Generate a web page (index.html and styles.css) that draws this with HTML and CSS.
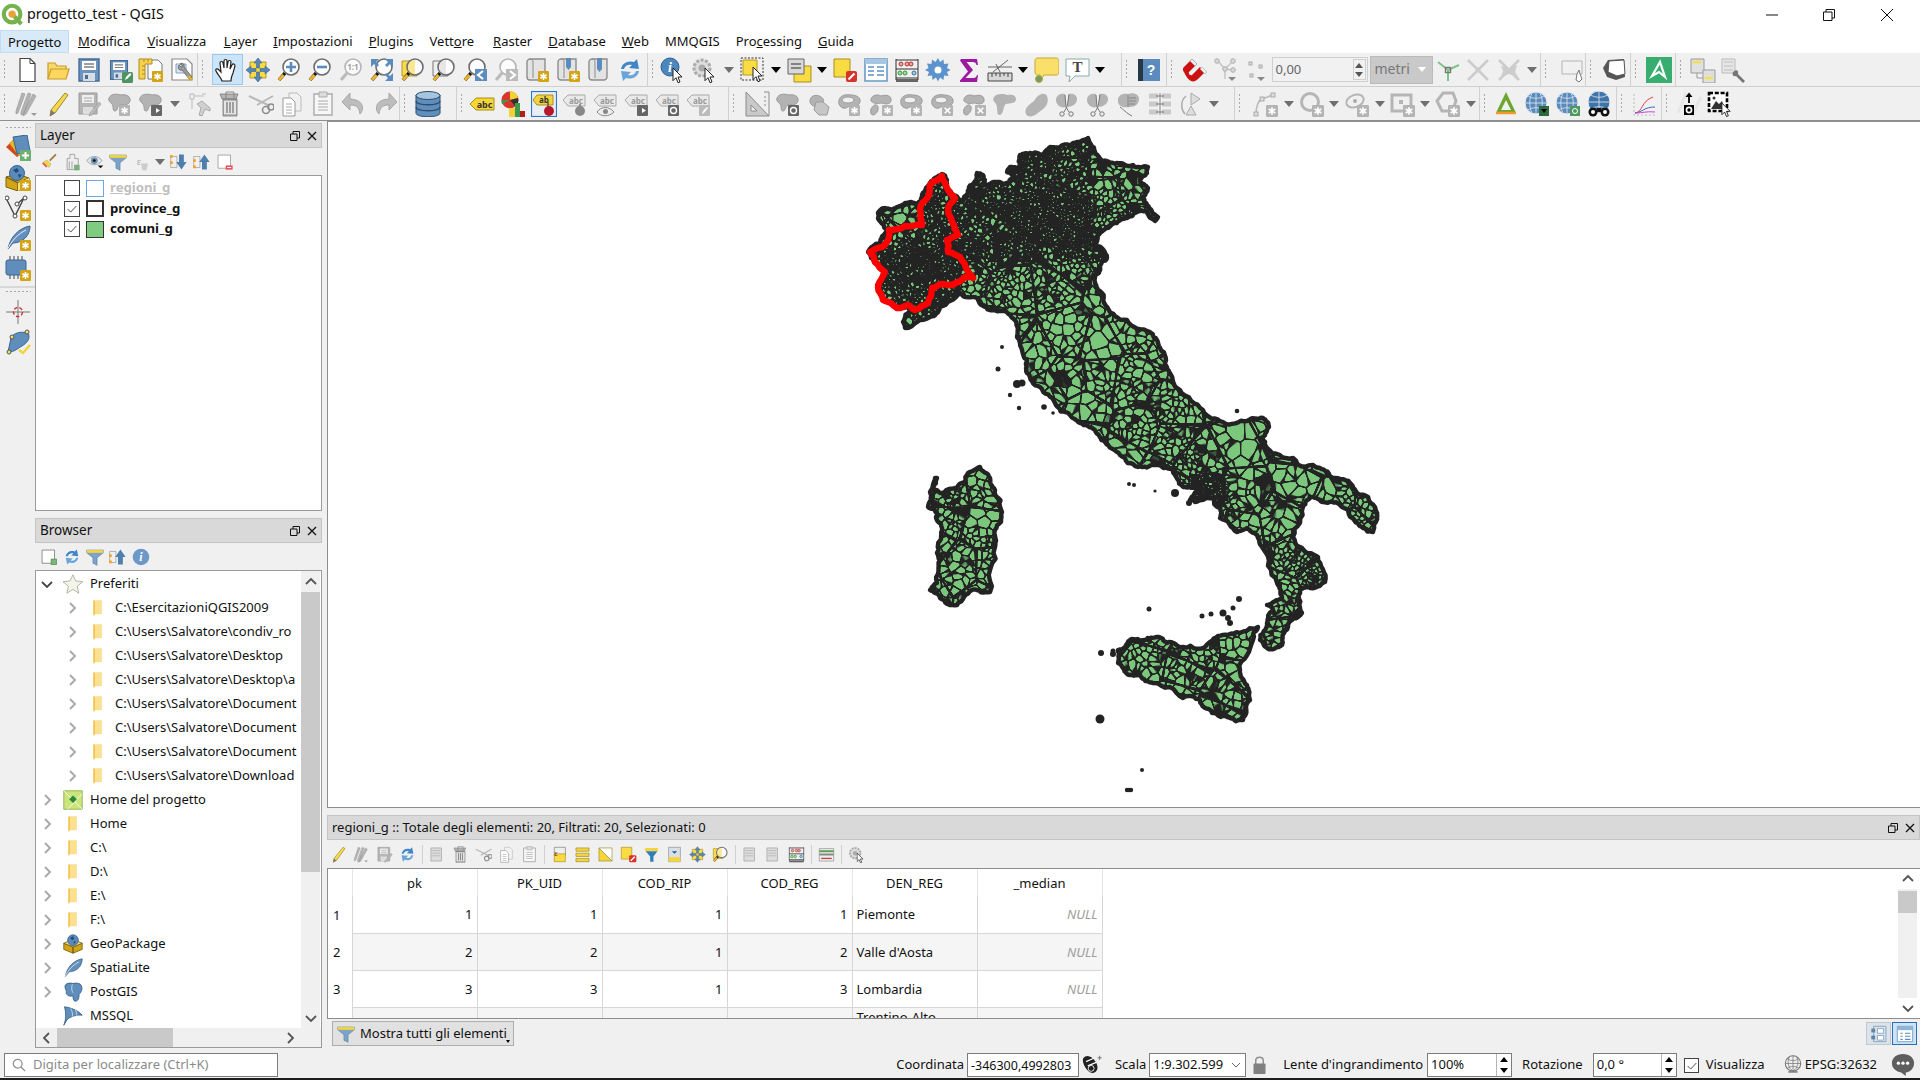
FILE: index.html
```html
<!DOCTYPE html>
<html lang="it">
<head>
<meta charset="utf-8">
<title>progetto_test - QGIS</title>
<link rel="stylesheet" href="styles.css">
</head>
<body>
<svg class="sprite" xmlns="http://www.w3.org/2000/svg">
<defs>
<symbol id="gb" viewBox="0 0 10 10"><rect width="10" height="10" rx="1" fill="#d3a516"/><path d="M5 1.8v6.4M2.2 3.4l5.6 3.2M2.2 6.6l5.6-3.2" stroke="#fff" stroke-width="1.4"/></symbol>
<symbol id="gg" viewBox="0 0 10 10"><rect width="10" height="10" rx="1" fill="#b4b4b4"/><path d="M5 1.8v6.4M2.2 3.4l5.6 3.2M2.2 6.6l5.6-3.2" stroke="#fff" stroke-width="1.4"/></symbol>
<symbol id="gx" viewBox="0 0 10 10"><rect width="10" height="10" rx="1" fill="#b4b4b4"/><path d="M2.5 2.5l5 5M7.5 2.5l-5 5" stroke="#fff" stroke-width="1.6"/></symbol>
<symbol id="blob" viewBox="0 0 26 26"><path d="M2 7c2-5 9-4 12-3 5-1 10 1 9 6-1 5-7 3-10 4-3 1-2 6-5 6-3 0-1-5-3-7S1 10 2 7z" fill="#b3b3b3" stroke="#9c9c9c"/></symbol>
<symbol id="ring" viewBox="0 0 26 26"><path d="M2 9c1-5 8-6 12-5 5 0 10 2 9 7-1 5-7 3-10 4-3 1-4 3-7 2S1 13 2 9z" fill="#b3b3b3" stroke="#9c9c9c"/><ellipse cx="11" cy="9" rx="6" ry="3" fill="#f0f0f0" stroke="#9c9c9c"/></symbol>
<symbol id="mag" viewBox="0 0 26 26"><path d="M9 16l-6 7" stroke="#111" stroke-width="3.4"/><path d="M7.5 18l-4.6 5" stroke="#ecb42a" stroke-width="3"/><circle cx="15" cy="10" r="8" fill="#fbfcfd" stroke="#6d6d6d" stroke-width="1.6"/></symbol>
<symbol id="magg" viewBox="0 0 26 26"><path d="M9 16l-6 7" stroke="#bbb" stroke-width="3.2"/><circle cx="15" cy="10" r="8" fill="#fbfcfd" stroke="#b5b5b5" stroke-width="1.6"/></symbol>
<symbol id="scr" viewBox="0 0 26 26"><path d="M6 2h15v18c0 2-2 3-3 3H6c-2 0-3-1-3-3V5c0-2 2-3 3-3z" fill="#e3e3e3" stroke="#8d8d8d" stroke-width="1.4"/><path d="M6 2c2 0 3 1 3 3v16" fill="none" stroke="#8d8d8d"/></symbol>
<symbol id="doc" viewBox="0 0 26 26"><path d="M6 1.5h10l5 5v18H6z" fill="#fff" stroke="#444" stroke-width="1.2"/><path d="M16 1.5v5h5" fill="none" stroke="#444"/></symbol>
<symbol id="fold" viewBox="0 0 26 26"><path d="M3 22V6h7l2 3h9v3" fill="#f8d86b" stroke="#cc9c24" stroke-width="1.2"/><path d="M3 22l3-10h18l-3 10z" fill="#fcd75f" stroke="#cc9c24" stroke-width="1.2"/></symbol>
<symbol id="sav" viewBox="0 0 26 26"><path d="M3 2h20v22H3z" fill="#6b93be" stroke="#456c95" stroke-width="1.4"/><path d="M6 4h14v9H6z" fill="#fff"/><path d="M8 7h10M8 10h10" stroke="#7d7d7d" stroke-width="1.3"/><path d="M7 16h12v8H7z" fill="#d7dde2"/><path d="M9 18h3v4H9z" fill="#456c95"/></symbol>
<symbol id="savas" viewBox="0 0 26 26"><use href="#sav" width="22" height="22" x="1" y="2"/><rect x="15" y="15" width="11" height="11" rx="1.5" fill="#4f9362"/><path d="M18 23l1-3 4-4 1.5 1.5-4 4z" fill="#fff"/></symbol>
<symbol id="lay" viewBox="0 0 26 26"><path d="M10 3h10l4 4v15H10z" fill="#fff" stroke="#777"/><path d="M1 2h13v5H7v15H1z" fill="#f5d14d" stroke="#b28d1c"/><path d="M4 9h3M4 13h3M4 17h3M6 2v3M10 2v3" stroke="#b28d1c"/><use href="#gb" x="14" y="14" width="11" height="11"/></symbol>
<symbol id="mgr" viewBox="0 0 26 26"><path d="M3 2h15l5 5v16H3z" fill="#fff" stroke="#888" stroke-width="1.2"/><path d="M7 7h10v9H7z" fill="#dbe6f1" stroke="#7f9fc0"/><path d="M11 7c3-2 5 1 4 3l8 10-2 3-8-10c-3 1-5-2-3-5l2 2 2-1z" fill="#9a9a9a" stroke="#555" stroke-width=".7"/><path d="M19 19l4 4" stroke="#dcae2d" stroke-width="3"/></symbol>
<symbol id="hand" viewBox="0 0 26 26"><path d="M8 24c-1-4-5-7-6-10-1-2 1-3 3-1l2 2-1-9c0-2 3-2 3 0l1 5V4c0-2 3-2 3 0v7l1-6c0-2 3-2 3 0l-1 7 2-4c1-2 3-1 3 1l-2 7c-1 3-2 4-2 8z" fill="#fff" stroke="#222" stroke-width="1.2"/></symbol>
<symbol id="pan" viewBox="0 0 26 26"><path d="M5 5h16v16H5z" fill="#f9dc42" stroke="#b3982b"/><path d="M13 1l4 5h-2.500v5h-3V6H9zM13 25l4-5h-2.500v-5h-3v5H9zM1 13l5-4v2.500h5v3H6V17zM25 13l-5-4v2.500h-5v3h5V17z" fill="#5785b5" stroke="#3a6592" stroke-width=".6"/></symbol>
<symbol id="zin" viewBox="0 0 26 26"><use href="#mag"/><path d="M10 10h10M15 5v10" stroke="#5b8cbd" stroke-width="2.600"/></symbol>
<symbol id="zout" viewBox="0 0 26 26"><use href="#mag"/><path d="M10 10h10" stroke="#5b8cbd" stroke-width="2.600"/></symbol>
<symbol id="z11" viewBox="0 0 26 26"><use href="#magg"/><text x="15" y="13" font-size="8" font-weight="700" text-anchor="middle" fill="#9e9e9e" font-family="Noto Sans">1:1</text></symbol>
<symbol id="zfull" viewBox="0 0 26 26"><use href="#mag"/><path d="M2 2h8L7 5l3 3-2 2-3-3-3 3zM24 2v8l-3-3-3 3-2-2 3-3-3-3zM24 24h-8l3-3-3-3 2-2 3 3 3-3z" fill="#5b8cbd"/></symbol>
<symbol id="zsel" viewBox="0 0 26 26"><path d="M2 4h15v15H2z" fill="#f8da4a" stroke="#b39626"/><use href="#mag"/><path d="M15 3a7 7 0 0 0 0 14z" fill="#f8da4a" opacity=".6"/></symbol>
<symbol id="zlay" viewBox="0 0 26 26"><path d="M2 4h15v15H2z" fill="#eee" stroke="#777"/><use href="#mag"/><path d="M15 3a7 7 0 0 0 0 14z" fill="#ddd" opacity=".7"/></symbol>
<symbol id="zlast" viewBox="0 0 26 26"><use href="#mag"/><path d="M13 12h12v12H13z" fill="#5b8cbd"/><path d="M21 14l-5 4 5 4" fill="none" stroke="#fff" stroke-width="2.200"/></symbol>
<symbol id="znext" viewBox="0 0 26 26"><use href="#magg"/><path d="M13 12h12v12H13z" fill="#bbb"/><path d="M17 14l5 4-5 4" fill="none" stroke="#fff" stroke-width="2.200"/></symbol>
<symbol id="map" viewBox="0 0 26 26"><use href="#scr"/><use href="#gb" x="14" y="14" width="11" height="11"/></symbol>
<symbol id="bmn" viewBox="0 0 26 26"><use href="#scr"/><path d="M11 1h5v9l-2.500 3-2.500-3z" fill="#5b8cbd"/><use href="#gb" x="14" y="14" width="11" height="11"/></symbol>
<symbol id="bm" viewBox="0 0 26 26"><use href="#scr"/><path d="M11 1h5v11l-2.500 3-2.500-3z" fill="#5b8cbd"/></symbol>
<symbol id="ref" viewBox="0 0 26 26"><path d="M4 12C5 6 11 3 17 5l3-3 2 10-10-1 3-3c-3-1-7 0-8 4z" fill="#3f86c9"/><path d="M22 14c-1 6-7 9-13 7l-3 3-2-10 10 1-3 3c3 1 7 0 8-4z" fill="#6aa5d9"/></symbol>
<symbol id="cur" viewBox="0 0 12 16"><path d="M1 1l9 9H6l2 5-2 .700-2-5-3 3z" fill="#fff" stroke="#222"/></symbol>
<symbol id="ident" viewBox="0 0 26 26"><circle cx="10" cy="10" r="9" fill="#4d86bd" stroke="#2f5f90"/><text x="10" y="15" font-size="14" font-weight="700" font-style="italic" text-anchor="middle" fill="#fff" font-family="Liberation Serif">i</text><use href="#cur" x="12" y="10" width="12" height="16"/></symbol>
<symbol id="act" viewBox="0 0 26 26"><circle cx="11" cy="11" r="8" fill="#ddd" stroke="#aaa" stroke-width="3" stroke-dasharray="3 1.500"/><circle cx="11" cy="11" r="3.500" fill="#aaa"/><use href="#cur" x="13" y="10" width="12" height="16"/></symbol>
<symbol id="sel" viewBox="0 0 26 26"><path d="M1 1h22v22H1z" fill="none" stroke="#333" stroke-dasharray="2 1.500"/><path d="M3 3h14v15H3z" fill="#f9dc42" stroke="#b39626"/><use href="#cur" x="12" y="9" width="12" height="16"/></symbol>
<symbol id="selv" viewBox="0 0 26 26"><path d="M8 9h17v16H8z" fill="#f9dc42" stroke="#a98e20"/><path d="M2 2h16v15H2z" fill="#d8d8d8" stroke="#666"/><path d="M5 7h10M5 11h10" stroke="#666" stroke-width="1.600"/></symbol>
<symbol id="desel" viewBox="0 0 26 26"><path d="M2 2h16v18H2z" fill="#f9dc42" stroke="#a98e20"/><rect x="14" y="14" width="11" height="11" rx="2" fill="#d9312c"/><path d="M16.500 22.500l6-6" stroke="#fff" stroke-width="2.200"/></symbol>
<symbol id="tab" viewBox="0 0 26 26"><path d="M2 2h22v22H2z" fill="#fff" stroke="#6a99c6" stroke-width="1.600"/><path d="M2 2h22v5H2z" fill="#a8c6e2"/><path d="M5 10h6M14 10h7M5 14h6M14 14h7M5 18h6M14 18h7" stroke="#5c8fc0" stroke-width="1.500"/></symbol>
<symbol id="calc" viewBox="0 0 26 26"><path d="M2 3h22M2 12h22M2 21h22" stroke="#333" stroke-width="1.200"/><path d="M2 22h22v3H2z" fill="#666"/><path d="M2 2v21M24 2v21" stroke="#333"/><circle cx="7" cy="7" r="2" fill="#e2a9a4" stroke="#b33"/><circle cx="17" cy="7" r="2" fill="#e2a9a4" stroke="#b33"/><circle cx="13" cy="7" r="2" fill="#e2a9a4" stroke="#b33"/><circle cx="6" cy="16" r="2" fill="#a8d8a4" stroke="#393"/><circle cx="11" cy="16" r="2" fill="#a8d8a4" stroke="#393"/><circle cx="20" cy="16" r="2" fill="#a9c4e2" stroke="#37a"/></symbol>
<symbol id="gear" viewBox="0 0 26 26"><path d="M13 1l2 4 3.500-2.500.5 4.500 4.500-.5-1.500 4.500 3.500 2-3.500 2 1.500 4-4.500-.5-.5 4.500-3.500-2.500-2 4-2-4-3.500 2.500-.5-4.500-4.500.5 1.500-4L0 13l3.500-2L2 6.500 6.500 7 7 2.500 10.500 5z" fill="#5c93cd"/><circle cx="13" cy="13" r="3.500" fill="#fff"/></symbol>
<symbol id="sig" viewBox="0 0 26 26"><path d="M5 2h16l1 6h-1.500c-.5-2-1.500-3-4-3h-6l6.500 8-7.500 8h8c2 0 3-1 3.500-3H22l-1 7H4v-1.500l8-9L4 3.500z" fill="#9b1aa0"/></symbol>
<symbol id="meas" viewBox="0 0 26 26"><path d="M1 16h24v8H1z" fill="#d8d8d8" stroke="#444"/><path d="M5 16v4M9 16v3M13 16v4M17 16v3M21 16v4" stroke="#444"/><path d="M6 15L21 3M13 15L9 7M1 10h24" stroke="#555" stroke-width=".9" fill="none"/></symbol>
<symbol id="tip" viewBox="0 0 26 26"><path d="M5 1h18c2 0 3 1 3 3v11c0 2-1 3-3 3H11l-3 5c-1-2-1-4-1-5H5c-2 0-3-1-3-3V4c0-2 1-3 3-3z" fill="#fae06a" stroke="#c6a82d"/><circle cx="6" cy="22" r="3.500" fill="#6d9d6c" stroke="#c6a82d"/></symbol>
<symbol id="tann" viewBox="0 0 26 26"><path d="M2 2h23v17H11l-6 6 1-6H2z" fill="#fff" stroke="#8aa" stroke-width="1"/><text x="13.500" y="15" font-size="15" font-weight="700" text-anchor="middle" fill="#444" font-family="Liberation Serif">T</text></symbol>
<symbol id="help" viewBox="0 0 26 26"><path d="M3 2h21v22H3z" fill="#5b8cbd"/><path d="M2 2h5v22H2z" fill="#263746"/><text x="15" y="18" font-size="14" font-weight="700" text-anchor="middle" fill="#fff" font-family="Liberation Sans">?</text></symbol>
<symbol id="mgn" viewBox="0 0 26 26"><path d="M3 15c-2-2-1-4 0-5l8-8 5 5-8 8c-1 1 1 4 3 3l8-8 5 5-7 7c-5 5-10 2-14-7z" fill="#cc1111"/><path d="M11 2l5 5-2 2-5-5zM21 10l5 5-2 2-5-5z" fill="#eee" stroke="#999" stroke-width=".5"/></symbol>
<symbol id="vert" viewBox="0 0 26 26"><path d="M13 12L5 3M13 12l8-8M13 12v10M13 12l8 1" stroke="#c4c4c4" stroke-width="1.500"/><g fill="#d7d7d7" stroke="#b0b0b0"><circle cx="5" cy="4" r="2.300"/><circle cx="21" cy="4" r="2.300"/><circle cx="13" cy="12" r="2.300"/><circle cx="21" cy="13" r="2.300"/></g><path d="M16 20h8l-4 4z" fill="#888"/></symbol>
<symbol id="dots" viewBox="0 0 26 26"><g fill="#ddd" stroke="#aaa"><rect x="6" y="5" width="3" height="3"/><rect x="16" y="8" width="3" height="3"/><rect x="7" y="17" width="3" height="3"/></g><path d="M14 20h8l-4 4z" fill="#888"/></symbol>
<symbol id="tr" viewBox="0 0 26 26"><path d="M13 13L3 5M13 13l11-5M13 13v11" stroke="#7ec48a" stroke-width="2"/><rect x="10.500" y="10.500" width="5" height="5" fill="none" stroke="#777" stroke-width="1.400"/></symbol>
<symbol id="xg" viewBox="0 0 26 26"><path d="M3 3l20 20M23 3L3 23" stroke="#ccc" stroke-width="2.500"/><circle cx="13" cy="13" r="2.500" fill="#ccc"/></symbol>
<symbol id="xg2" viewBox="0 0 26 26"><path d="M3 3l20 20M23 3L3 23" stroke="#ccc" stroke-width="2.500"/><path d="M5 9l8 2 8-3-2 7 3 5-9-3-8 3 2-6z" fill="#ccc"/></symbol>
<symbol id="hnd" viewBox="0 0 26 26"><path d="M4 4h20v13H4z" fill="none" stroke="#b5b5b5"/><path d="M19 17l-1 6 3 2 3-3-2-5-1-4z" fill="#fff" stroke="#777"/></symbol>
<symbol id="cube" viewBox="0 0 26 26"><path d="M7 3l16-1 1 18-9 3-9-3-4-9z" fill="#555"/><path d="M8 4l15-1 1 14-8 2-9-4z" fill="#fff" stroke="#555"/></symbol>
<symbol id="ms" viewBox="0 0 26 26"><path d="M0 0h26v26H0z" fill="#37ae6f"/><path d="M14 5l5 15-6-5-7 4z" fill="none" stroke="#fff" stroke-width="2.200"/></symbol>
<symbol id="jt" viewBox="0 0 26 26"><g fill="#e0e0e0" stroke="#999"><path d="M1 2h13v14H1z"/><path d="M13 13h12v13H13z"/></g><path d="M2 5h11M14 17h10" stroke="#ddd" stroke-width="3"/><path d="M3 5h8M15 21h8" stroke="#f3e04e" stroke-width="2.500"/><path d="M7 16v5h6" fill="none" stroke="#999"/></symbol>
<symbol id="jt2" viewBox="0 0 26 26"><path d="M1 2h13v14H1z" fill="#e6e6e6" stroke="#bbb"/><path d="M3 5h9M3 9h9M3 13h9" stroke="#ccc" stroke-width="1.500"/><path d="M13 14c3-2 5 0 4 3l7 7-2 2-7-7c-3 1-5-2-2-5z" fill="#777"/></symbol>
<symbol id="pen" viewBox="0 0 26 26"><path d="M20 2l3 2-13 18-5 3 1-6z" fill="#f5d84b" stroke="#9a8a33"/><path d="M5 25l1-6 4 3z" fill="#777"/></symbol>
<symbol id="penm" viewBox="0 0 26 26"><path d="M8 2l3 1-7 19-2 1 0-3zM14 2l3 1-7 20-3 1 0-3zM19 3l3 2-10 18-3 2 1-4z" fill="#b4b4b4" stroke="#999" stroke-width=".7"/><path d="M17 22h6l-3 3z" fill="#999"/></symbol>
<symbol id="savg" viewBox="0 0 26 26"><path d="M3 2h18v21H3z" fill="#b5b5b5" stroke="#999"/><path d="M6 4h12v8H6z" fill="#eee"/><path d="M8 7h8M8 10h8" stroke="#aaa"/><path d="M7 16h10v7H7z" fill="#ddd"/><path d="M23 11l2 2-9 11-3 1 1-3z" fill="#bbb" stroke="#999" stroke-width=".6"/></symbol>
<symbol id="pa" viewBox="0 0 26 26"><use href="#blob"/><use href="#gg" x="12" y="14" width="11" height="11"/></symbol>
<symbol id="pm" viewBox="0 0 26 26"><use href="#blob"/><rect x="13" y="14" width="11" height="11" rx="1" fill="#666"/><path d="M15 19.500h3V17l4 2.500-4 2.500v-2.500h-3z" fill="#fff"/></symbol>
<symbol id="vt" viewBox="0 0 26 26"><path d="M4 3h4v5H4zM16 3h4" fill="none" stroke="#bbb"/><path d="M6 8v10M8 5h10" stroke="#bbb"/><path d="M11 13l4 4-2 7 3 1 3-7 5 2v-3l-8-7z" fill="#d0d0d0" stroke="#aaa"/></symbol>
<symbol id="tr2" viewBox="0 0 26 26"><path d="M6 8h14v17H6zM3 3h18l-2 5H5z" fill="#b5b5b5" stroke="#777" stroke-width=".8"/><path d="M9 7V1h8v6" fill="none" stroke="#888"/><path d="M7 10h12v13H7z" fill="#e5e5e5"/><path d="M10 11v11M13 11v11M16 11v11" stroke="#888" stroke-width="1.500"/></symbol>
<symbol id="cut" viewBox="0 0 26 26"><path d="M1 5l21 10M25 5L9 14" stroke="#b9b9b9" stroke-width="2"/><circle cx="18" cy="19" r="3.500" fill="none" stroke="#8e8e8e" stroke-width="1.600"/><circle cx="23" cy="16" r="3" fill="none" stroke="#8e8e8e" stroke-width="1.600"/></symbol>
<symbol id="cop" viewBox="0 0 26 26"><path d="M10 2h8l4 4v14H10z" fill="#f1f1f1" stroke="#bbb"/><path d="M4 7h8l4 4v14H4z" fill="#fff" stroke="#999"/><path d="M7 13h6M7 16h6M7 19h6M7 22h6" stroke="#aaa"/></symbol>
<symbol id="pst" viewBox="0 0 26 26"><path d="M4 3h18v21H4z" fill="#f7f7f7" stroke="#aaa" stroke-width="1.400"/><path d="M9 1h8v5H9z" fill="#ddd" stroke="#aaa"/><path d="M8 10h10M8 13h10M8 16h10M8 19h10" stroke="#aaa"/></symbol>
<symbol id="und" viewBox="0 0 26 26"><path d="M9 2L1 11l8 8v-5c5 0 9 1 10 9 4-4 5-14-10-15z" fill="#bdbdbd" stroke="#a7a7a7"/></symbol>
<symbol id="red" viewBox="0 0 26 26"><path d="M17 2l8 9-8 8v-5c-5 0-9 1-10 9-4-4-5-14 10-15z" fill="#bdbdbd" stroke="#a7a7a7"/></symbol>
<symbol id="db" viewBox="0 0 26 26"><path d="M1 4v18c0 5 24 5 24 0V4z" fill="#5f8ebd" stroke="#2e4c6b"/><ellipse cx="13" cy="4.500" rx="12" ry="4" fill="#a5c4e0" stroke="#2e4c6b"/><path d="M1 10c0 5 24 5 24 0M1 16c0 5 24 5 24 0" fill="none" stroke="#2e4c6b" stroke-width="1.300"/></symbol>
<symbol id="abc" viewBox="0 0 26 26"><path d="M1 13l6-6h18v12H7z" fill="#f5d636" stroke="#a98e20"/><text x="15.500" y="17" font-size="9" font-weight="700" text-anchor="middle" fill="#333" font-family="Noto Sans">abc</text></symbol>
<symbol id="dia" viewBox="0 0 26 26"><circle cx="10" cy="9" r="8.500" fill="#d8362d"/><path d="M10 9V.500A8.500 8.500 0 0 1 18 7z" fill="#f0d52b"/><path d="M10 9L2 13a8.500 8.500 0 0 1-.5-4z" fill="#3b9a48"/><path d="M10 9l8-2c1 3 0 6-3 8z" fill="#333"/><path d="M9 17h6v9H9z" fill="#f4cf38"/><path d="M15 12h5v14h-5z" fill="#3b9a48"/><path d="M20 20h5v6h-5z" fill="#b31d1d"/></symbol>
<symbol id="abl" viewBox="0 0 26 26"><rect x=".5" y=".5" width="25" height="25" fill="#e9eef5" stroke="#2d77c8" stroke-width="1.200"/><path d="M2 9l4-5h16v10H6z" fill="#f3d43c" stroke="#a98e20"/><text x="13" y="12" font-size="8" font-weight="700" text-anchor="middle" fill="#333" font-family="Noto Sans">ab</text><path d="M17 11v6" stroke="#555" stroke-width="1.500"/><circle cx="18" cy="20" r="5" fill="#b4192b"/></symbol>
<symbol id="abg" viewBox="0 0 26 26"><path d="M1 9l5-5h17v11H6z" fill="#e9e9e9" stroke="#aaa"/><text x="14" y="13" font-size="8" font-weight="700" text-anchor="middle" fill="#999" font-family="Noto Sans">abc</text></symbol>
<symbol id="abp" viewBox="0 0 26 26"><use href="#abg"/><path d="M18 13v6" stroke="#777" stroke-width="1.500"/><circle cx="18" cy="20" r="5" fill="#888"/></symbol>
<symbol id="abe" viewBox="0 0 26 26"><use href="#abg"/><path d="M4 21c4-6 12-6 17 0-5 5-13 5-17 0z" fill="#eee" stroke="#888"/><circle cx="12.500" cy="20.500" r="2.500" fill="#888"/></symbol>
<symbol id="abm" viewBox="0 0 26 26"><use href="#abg"/><rect x="13" y="14" width="11" height="11" rx="1" fill="#666"/><path d="M15 19.500h3V17l4 2.500-4 2.500v-2.500h-3z" fill="#fff"/></symbol>
<symbol id="abr" viewBox="0 0 26 26"><use href="#abg"/><rect x="13" y="14" width="11" height="11" rx="1" fill="#666"/><circle cx="18.500" cy="19.500" r="3" fill="none" stroke="#fff" stroke-width="1.400"/></symbol>
<symbol id="abd" viewBox="0 0 26 26"><use href="#abg"/><rect x="13" y="14" width="11" height="11" rx="1" fill="#bbb"/><path d="M16 23l1-3 4-4 1 1-4 5z" fill="#fff"/></symbol>
<symbol id="rt" viewBox="0 0 26 26"><path d="M2 25V1l23 24z" fill="#c9c9c9" stroke="#8c8c8c"/><path d="M7 20v-6l6 6zM20 1h5v24" fill="#eee" stroke="#8c8c8c"/><path d="M20 6h2M20 10h2M20 14h2" stroke="#8c8c8c"/></symbol>
<symbol id="ro" viewBox="0 0 26 26"><use href="#blob"/><rect x="13" y="14" width="11" height="11" rx="1" fill="#666"/><circle cx="18.500" cy="19.500" r="3" fill="none" stroke="#fff" stroke-width="1.400"/></symbol>
<symbol id="hx" viewBox="0 0 26 26"><path d="M4 9c1-5 7-6 11-3 4 2 3 7 0 9-4 2-12 0-11-6z" fill="#b3b3b3" stroke="#9c9c9c"/><path d="M10 11l7 0 6 5-2 8H13l-5-5z" fill="#c6c6c6" stroke="#9c9c9c"/></symbol>
<symbol id="rg" viewBox="0 0 26 26"><use href="#ring"/><use href="#gg" x="12" y="14" width="11" height="11"/></symbol>
<symbol id="pa2" viewBox="0 0 26 26"><path d="M3 8c1-4 7-5 10-3 6-2 11 0 10 5-1 4-7 3-9 2-2 0-5 1-8 0-2-1-4-2-3-4z" fill="#b3b3b3" stroke="#9c9c9c"/><path d="M3 18c2-4 6-6 7-2 1 3-2 8-5 8-2 0-3-3-2-6z" fill="#b3b3b3" stroke="#9c9c9c"/><use href="#gg" x="14" y="14" width="11" height="11"/></symbol>
<symbol id="rd" viewBox="0 0 26 26"><use href="#ring"/><use href="#gx" x="12" y="14" width="11" height="11"/></symbol>
<symbol id="pd" viewBox="0 0 26 26"><path d="M3 8c1-4 7-5 10-3 6-2 11 0 10 5-1 4-7 3-9 2-2 0-5 1-8 0-2-1-4-2-3-4z" fill="#b3b3b3" stroke="#9c9c9c"/><path d="M3 18c2-4 6-6 7-2 1 3-2 8-5 8-2 0-3-3-2-6z" fill="#b3b3b3" stroke="#9c9c9c"/><use href="#gx" x="14" y="14" width="11" height="11"/></symbol>
<symbol id="bg" viewBox="0 0 26 26"><path d="M2 6c3-4 10-3 13-2 5-1 9 0 9 4 0 5-6 4-10 5-3 1-2 10-6 11-4 1-2-8-4-11S0 9 2 6z" fill="#b3b3b3"/></symbol>
<symbol id="bg2" viewBox="0 0 26 26"><path d="M5 25c-4-2-3-8 1-11 3-3 5-3 7-7 3-4 9-6 11-2 2 5 0 10-4 13-5 4-10 9-15 7z" fill="#b3b3b3"/></symbol>
<symbol id="sc" viewBox="0 0 26 26"><path d="M2 8c1-5 6-6 9-5l1 13c-3 1-6 0-8-2-2-2-2-4-2-6zM14 3c4-1 9 0 9 5 0 4-3 7-9 8z" fill="#b3b3b3"/><path d="M11 4l1 12 3 5M15 4l-2 12-3 5" stroke="#777" fill="none"/><circle cx="8" cy="23" r="2.200" fill="#eee" stroke="#777"/><circle cx="17" cy="23" r="2.200" fill="#eee" stroke="#777"/></symbol>
<symbol id="sc2" viewBox="0 0 26 26"><path d="M2 8c1-5 6-6 10-5 5-2 11 0 11 5s-4 8-9 8c-6 1-13 0-12-8z" fill="#b3b3b3"/><path d="M12 4v12M13 10h7M13 13h6M13 7h7" stroke="#888"/><path d="M4 16c3 2 6 6 12 9" stroke="#777" fill="none"/></symbol>
<symbol id="grd" viewBox="0 0 26 26"><path d="M2 5h22M2 13h22M2 21h22" stroke="#c9c9c9" stroke-width="5" stroke-dasharray="9 4"/><path d="M13 2v22" stroke="#888"/><path d="M9 5h8M9 13h8M9 21h8" stroke="#777"/></symbol>
<symbol id="rot" viewBox="0 0 26 26"><path d="M13 2v12l9-6zM13 15l-5 9h10z" fill="#ddd" stroke="#aaa"/><path d="M8 5C1 11 4 20 7 23" fill="none" stroke="#aaa" stroke-width="1.400"/></symbol>
<symbol id="n1" viewBox="0 0 26 26"><path d="M3 24c0-7 2-14 6-16l11-4" fill="none" stroke="#bbb" stroke-width="1.600"/><g fill="#ddd" stroke="#aaa"><rect x="1" y="21" width="4" height="4"/><rect x="7" y="6" width="4" height="4"/><rect x="18" y="2" width="4" height="4"/></g><use href="#gg" x="13" y="14" width="12" height="12"/></symbol>
<symbol id="n2" viewBox="0 0 26 26"><circle cx="11" cy="11" r="8.500" fill="none" stroke="#b5b5b5" stroke-width="3"/><use href="#gg" x="13" y="14" width="12" height="12"/></symbol>
<symbol id="n3" viewBox="0 0 26 26"><ellipse cx="11" cy="10" rx="9" ry="6" transform="rotate(-20 11 10)" fill="none" stroke="#b5b5b5" stroke-width="2"/><circle cx="11" cy="10" r="2" fill="#aaa"/><use href="#gg" x="13" y="14" width="12" height="12"/></symbol>
<symbol id="n4" viewBox="0 0 26 26"><path d="M2 4h19v16H2z" fill="none" stroke="#b5b5b5" stroke-width="3"/><rect x="9" y="9" width="4" height="4" fill="#b5b5b5"/><use href="#gg" x="13" y="14" width="12" height="12"/></symbol>
<symbol id="n5" viewBox="0 0 26 26"><path d="M8 2h10l3 8-4 10H7L2 10z" fill="none" stroke="#b5b5b5" stroke-width="3"/><use href="#gg" x="13" y="14" width="12" height="12"/></symbol>
<symbol id="tc" viewBox="0 0 26 26"><path d="M3 3v21h21" fill="none" stroke="#bbb" stroke-dasharray="2 2"/><path d="M4 22c8-1 6-12 18-16" stroke="#d44" fill="none"/><path d="M4 22c8-1 9-6 20-6" stroke="#46c" fill="none"/><path d="M4 22c8 0 12-2 20-1" stroke="#c4c" fill="none"/></symbol>
<symbol id="cam" viewBox="0 0 26 26"><path d="M2 22L10 2M16 25L25 6" stroke="#e6e6e6" stroke-width="3"/><path d="M13 4v8" stroke="#000" stroke-width="1.800"/><path d="M9.500 6L13 1.500 16.500 6z" fill="#000"/><rect x="8" y="14" width="10" height="10" fill="#000"/><circle cx="13" cy="19" r="3.400" fill="#fff"/><circle cx="13" cy="19" r="1.700" fill="#000"/></symbol>
<symbol id="shot" viewBox="0 0 26 26"><path d="M2 2h18v18H2z" fill="#fff" stroke="#000" stroke-width="2.600" stroke-dasharray="4 1.800"/><path d="M4 18l5-8 3 3 3-3 3 8z" fill="#333"/><circle cx="7" cy="7" r="1.500" fill="#333"/><use href="#cur" x="14" y="11" width="11" height="15"/></symbol>
<symbol id="addl" viewBox="0 0 26 26"><path d="M1 12l8-8 9 14-6 4z" fill="#d24a1a"/><path d="M4 8l8-6 8 17-6 2z" fill="#e9b528"/><path d="M8 2l14-2 3 16-13 3z" fill="#5f8ebd" stroke="#3a648f"/><rect x="15" y="15" width="11" height="11" fill="#6db06f"/><path d="M20.500 17v7M17 20.500h7" stroke="#fff" stroke-width="2"/></symbol>
<symbol id="newgp" viewBox="0 0 26 26"><path d="M1 12l11-3 12 4-11 5zM1 12v10l12 4v-8zM24 13v8l-11 5v-8z" fill="#d3a516" stroke="#7a6210"/><path d="M13 18l11-5v8l-11 5z" fill="#f5df79"/><circle cx="12" cy="8" r="7.500" fill="#5a8abb" stroke="#3a648f"/><path d="M8 5l4-2 2 3-3 2zM13 9l4 1-3 3z" fill="#244e77"/><use href="#gb" x="15" y="15" width="11" height="11"/></symbol>
<symbol id="newsh" viewBox="0 0 26 26"><path d="M1 3l9 18 9-18-7 6" fill="none" stroke="#444" stroke-width="1.400"/><circle cx="2" cy="3" r="2" fill="#fff" stroke="#444"/><circle cx="10" cy="21" r="2" fill="#fff" stroke="#444"/><circle cx="12" cy="9" r="2" fill="#fff" stroke="#444"/><circle cx="20" cy="3" r="2" fill="#fff" stroke="#444"/><use href="#gb" x="15" y="15" width="11" height="11"/></symbol>
<symbol id="feath" viewBox="0 0 26 26"><path d="M3 24C5 12 14 3 25 1c0 6-3 11-6 13-2 2-7 4-11 4z" fill="#6490bb" stroke="#3a648f"/><path d="M2 25C7 15 13 9 21 5" stroke="#eef" fill="none"/></symbol>
<symbol id="newsl" viewBox="0 0 26 26"><use href="#feath"/><use href="#gb" x="15" y="15" width="11" height="11"/></symbol>
<symbol id="chip" viewBox="0 0 26 26"><path d="M5 1v4M9 1v4M13 1v4M17 1v4M5 20v4M9 20v4M13 20v4M17 20v4" stroke="#444"/><rect x="1" y="5" width="20" height="15" rx="2" fill="#5f8ebd" stroke="#3a648f"/><use href="#gb" x="15" y="15" width="11" height="11"/></symbol>
<symbol id="xh" viewBox="0 0 26 26"><path d="M13 1v24M1 13h24" stroke="#777"/><circle cx="13" cy="13" r="4.500" fill="none" stroke="#c33" stroke-width="1.400" stroke-dasharray="3.500 2"/></symbol>
<symbol id="digit" viewBox="0 0 26 26"><path d="M3 23L6 9c2-5 10-7 17-5 3 5-1 10-6 13-4 2-7 6-14 6z" fill="#5f8ebd" stroke="#3a648f"/><g fill="#f5df5f" stroke="#555"><circle cx="4" cy="23" r="2"/><circle cx="7" cy="8" r="2"/><circle cx="22" cy="3" r="2"/></g><path d="M14 21l4 3 7-8" fill="none" stroke="#f1d430" stroke-width="2.200"/></symbol>
<symbol id="erase" viewBox="0 0 26 26"><path d="M3 15l6 6 2-2-6-6z" fill="#e34d4d"/><path d="M5 13l5-3 6 6-3 5z" fill="#f5d53c" stroke="#bb9"/><path d="M14 11l9-9" stroke="#a27a3d" stroke-width="2.600"/></symbol>
<symbol id="gcpy" viewBox="0 0 26 26"><path d="M10 2h7v6h5v16H6V8h4z" fill="#eee" stroke="#888"/><path d="M9 12v11M13 12v11" stroke="#888"/><rect x="16" y="17" width="8" height="8" fill="#7bb07e"/></symbol>
<symbol id="eye" viewBox="0 0 26 26"><path d="M1 11c6-8 17-8 22 0-5 8-16 8-22 0z" fill="#e3e7ec" stroke="#7e8d9c"/><circle cx="12" cy="11" r="5" fill="#6e8faf"/><circle cx="12" cy="11" r="2" fill="#111"/><path d="M17 18h8l-4 4z" fill="#111"/></symbol>
<symbol id="filt" viewBox="0 0 26 26"><path d="M1 3h24v4L16 14v11l-6-3v-8L1 7z" fill="#7da3c8" stroke="#4e7ba6" stroke-width=".8"/><path d="M1 3h24v4H1z" fill="#f5d53c"/></symbol>
<symbol id="eps" viewBox="0 0 26 26"><text x="7" y="17" font-size="16" fill="#aaa" font-family="Liberation Serif">&#949;</text><path d="M13 15h10l-2 10h-6z" fill="#ccc"/></symbol>
<symbol id="tdown" viewBox="0 0 26 26"><path d="M1 5h9v16H1z" fill="none" stroke="#999"/><rect x="0" y="3" width="4" height="4" fill="#f2a32c"/><rect x="0" y="12" width="4" height="4" fill="#f2a32c"/><path d="M13 2h7v11h4l-7.500 11L9 13h4z" fill="#4f7fae"/></symbol>
<symbol id="tup" viewBox="0 0 26 26"><path d="M1 5h9v16H1z" fill="none" stroke="#999"/><rect x="0" y="9" width="4" height="4" fill="#f2a32c"/><rect x="0" y="18" width="4" height="4" fill="#f2a32c"/><path d="M13 24h7V13h4L16.500 2 9 13h4z" fill="#4f7fae"/></symbol>
<symbol id="rem" viewBox="0 0 26 26"><path d="M3 3h18v19H3z" fill="#fff" stroke="#888"/><rect x="14" y="18" width="10" height="6" fill="#ef4858"/><path d="M16 21h6" stroke="#fff" stroke-width="1.500"/></symbol>
<symbol id="addb" viewBox="0 0 26 26"><path d="M3 3h18v19H3z" fill="#fff" stroke="#666"/><rect x="16" y="16" width="8" height="8" fill="#7db57d" stroke="#4e8a4e"/></symbol>
<symbol id="info" viewBox="0 0 26 26"><circle cx="13" cy="13" r="12" fill="#6c99c8"/><text x="13" y="19" font-size="17" font-weight="700" font-style="italic" text-anchor="middle" fill="#fff" font-family="Liberation Serif">i</text></symbol>
<symbol id="star" viewBox="0 0 26 26"><path d="M13 1l3.500 8 9 1-7 6 2 9-7.500-5-8 5 2-9-7-6 9-1z" fill="#f4f4ea" stroke="#9aa58a"/></symbol>
<symbol id="dir" viewBox="0 0 26 26"><path d="M7 3h11v18H9l-2 2z" fill="#fbe08f"/><path d="M7 3v20l2-2V4z" fill="#f0c24e"/></symbol>
<symbol id="proj" viewBox="0 0 26 26"><path d="M1 1h24v24H1z" fill="#cbe57b" stroke="#7ba83d"/><path d="M1 1l24 24M25 5L6 25" stroke="#fff"/><path d="M13 7l5 5-5 5-5-5z" fill="#2b8a37"/></symbol>
<symbol id="gpk" viewBox="0 0 26 26"><path d="M1 12l12 5v8L1 20zM25 12l-12 5v8l12-5z" fill="#d3a516" stroke="#6b5610"/><path d="M1 12l12-5 12 5-12 5z" fill="#f5df79" stroke="#6b5610"/><circle cx="13" cy="8" r="7" fill="#5a8abb" stroke="#3a648f"/><path d="M9 5l4-2 2 3-3 2zM14 9l3 1-3 3z" fill="#244e77"/></symbol>
<symbol id="pg" viewBox="0 0 26 26"><path d="M3 4c2-3 8-3 10-2 4-1 9-1 11 3 2 5-1 9-3 11 0 4-1 9-5 9-3 0-3-5-3-7-4 1-7 0-8-2-2-2 0-3-1-5S2 6 3 4z" fill="#5f8ebd" stroke="#2e527a"/><path d="M12 3c-1 5-1 8 1 11" fill="none" stroke="#d7e4f0"/></symbol>
<symbol id="mss" viewBox="0 0 26 26"><path d="M2 1c8 1 18 5 23 11-8-1-15 2-19 5l-5 8c3-7 3-16 1-24z" fill="#5f8ebd" stroke="#2e527a"/><path d="M10 3c2 4 3 8 2 11M16 5c2 3 2 6 2 8" stroke="#d7e4f0" fill="none"/></symbol>
<symbol id="srch" viewBox="0 0 16 16"><circle cx="6.500" cy="6.500" r="5" fill="none" stroke="#8f8f8f" stroke-width="1.400"/><path d="M10 10l5 5" stroke="#8f8f8f" stroke-width="1.600"/></symbol>
<symbol id="cd" viewBox="0 0 26 26"><path d="M5 3c4-2 9 1 12 6 4 6 3 11-1 13s-9-2-12-8C2 9 1 5 5 3z" fill="#222"/><path d="M6 9l9-4M8 14l10-4" stroke="#fff" stroke-width="1.500"/><circle cx="12" cy="17" r="3.500" fill="none" stroke="#fff"/><path d="M22 2v5M19.500 4.500h5" stroke="#666"/></symbol>
<symbol id="lock" viewBox="0 0 20 26"><path d="M5 12V7c0-6 10-6 10 0v5" fill="none" stroke="#909090" stroke-width="2"/><rect x="2" y="11" width="16" height="14" rx="1" fill="#808080"/></symbol>
<symbol id="glob" viewBox="0 0 26 26"><circle cx="13" cy="11" r="10" fill="none" stroke="#777" stroke-width="1.400"/><path d="M3 11h20M13 1v20M6 5c4 3 10 3 14 0M6 17c4-3 10-3 14 0M8 3c-3 6-1 14 5 18 6-4 8-12 5-18" fill="none" stroke="#777"/><path d="M7 22h12" stroke="#777" stroke-width="2"/></symbol>
<symbol id="bub" viewBox="0 0 26 26"><path d="M13 1c7 0 12 4 12 10s-5 10-9 10v4l-5-4c-5-1-10-4-10-10S6 1 13 1z" fill="#5e5e5e"/><circle cx="8" cy="11" r="1.800" fill="#fff"/><circle cx="13" cy="11" r="1.800" fill="#fff"/><circle cx="18" cy="11" r="1.800" fill="#fff"/></symbol>
<symbol id="ffm" viewBox="0 0 26 26"><path d="M3 3h20v20H3z" fill="#fff" stroke="#5b8cbd"/><path d="M3 3h20v5H3z" fill="#8fb4d8"/><path d="M7 12h3M13 12h7M7 16h3M13 16h7M7 20h3M13 20h7" stroke="#5b8cbd" stroke-width="1.400"/></symbol>
<symbol id="ffo" viewBox="0 0 26 26"><path d="M6 3h16v20H6z" fill="#d8e4f0" stroke="#7797b7"/><rect x="3" y="6" width="5" height="5" fill="#6083a7"/><rect x="3" y="15" width="5" height="5" fill="#6083a7"/><path d="M11 6h8v6h-8zM11 15h8v6h-8z" fill="#fff" stroke="#7797b7"/></symbol>
<symbol id="ew" viewBox="0 0 26 26"><path d="M3 3h16v20H3z" fill="#ddd" stroke="#999"/><path d="M5 7h12M5 11h12M5 15h12" stroke="#aaa"/></symbol>
<symbol id="evb" viewBox="0 0 26 26"><path d="M2 4h22v19H2z" fill="#eee" stroke="#888"/><path d="M2 8h22" stroke="#5aa050" stroke-width="3"/><path d="M2 13h22" stroke="#888" stroke-width="3"/><path d="M5 19h16" stroke="#b44" stroke-width="2"/></symbol>
<symbol id="flt" viewBox="0 0 26 26"><path d="M3 3h20v5H3z" fill="#f5d53c"/><path d="M4 8h18l-6 8v8h-5v-8z" fill="#2f7dbb"/></symbol>
<symbol id="selx" viewBox="0 0 26 26"><path d="M5 2h17v12H5z" fill="#eee" stroke="#777"/><path d="M5 12h17v12H5z" fill="#f9dc42" stroke="#a98e20"/><text x="5" y="15" font-size="13" fill="#722" font-family="Liberation Serif">&#949;</text></symbol>
<symbol id="rows" viewBox="0 0 26 26"><path d="M3 3h20v5H3zM3 11h20v5H3zM3 19h20v5H3z" fill="#f5d53c" stroke="#9c8826"/></symbol>
<symbol id="inv" viewBox="0 0 26 26"><path d="M3 3l20 20H3z" fill="#f5d53c" stroke="#9c8826"/><path d="M3 3h20v20z" fill="#fff" stroke="#9c8826"/></symbol>
<symbol id="tot" viewBox="0 0 26 26"><path d="M4 2h18v22H4z" fill="#d9e0ea" stroke="#888"/><path d="M4 17h18v7H4z" fill="#f5d53c"/><path d="M13 3v5M9 8h8l-4 4z" fill="#1d5a8c"/></symbol>
</defs>
</svg>

<header class="title"><svg class="logo" viewBox="0 0 26 26"><circle cx="12" cy="12" r="9" fill="none" stroke="#74b24e" stroke-width="4.500"/><path d="M14 14l8 9" stroke="#74b24e" stroke-width="4.500"/><circle cx="12" cy="12" r="4" fill="#e9a238"/></svg><span class="title-t">progetto_test - QGIS</span>
<div class="win"><svg viewBox="0 0 12 12"><path d="M0 6h12" stroke="#111"/></svg><svg viewBox="0 0 12 12"><path d="M.5 3h8.500v8.500H.5zM3 3V.5h8.500V9H9" fill="none" stroke="#111"/></svg><svg viewBox="0 0 12 12"><path d="M0 0l12 12M12 0L0 12" stroke="#111"/></svg></div>
</header>
<nav class="menu"><span class="on">Progetto</span><span class="m2"><u>M</u>odifica</span><span class="m3"><u>V</u>isualizza</span><span class="m4"><u>L</u>ayer</span><span class="m5"><u>I</u>mpostazioni</span><span class="m6"><u>P</u>lugins</span><span class="m7">Vett<u>o</u>re</span><span class="m8"><u>R</u>aster</span><span class="m9"><u>D</u>atabase</span><span class="m10"><u>W</u>eb</span><span class="m11">MMQGIS</span><span class="m12">Pro<u>c</u>essing</span><span class="m13"><u>G</u>uida</span></nav>

<div class="bars">
<div class="row">
 <div class="tb t11"><i class="b"><svg><use href="#doc"/></svg></i><i class="b"><svg><use href="#fold"/></svg></i><i class="b"><svg><use href="#sav"/></svg></i><i class="b"><svg><use href="#savas"/></svg></i><i class="b"><svg><use href="#lay"/></svg></i><i class="b"><svg><use href="#mgr"/></svg></i></div>
 <div class="tb t12"><i class="b act"><svg><use href="#hand"/></svg></i><i class="b"><svg><use href="#pan"/></svg></i><i class="b"><svg><use href="#zin"/></svg></i><i class="b"><svg><use href="#zout"/></svg></i><i class="b"><svg><use href="#z11"/></svg></i><i class="b"><svg><use href="#zfull"/></svg></i><i class="b"><svg><use href="#zsel"/></svg></i><i class="b"><svg><use href="#zlay"/></svg></i><i class="b"><svg><use href="#zlast"/></svg></i><i class="b"><svg><use href="#znext"/></svg></i><i class="b"><svg><use href="#map"/></svg></i><i class="b"><svg><use href="#bmn"/></svg></i><i class="b"><svg><use href="#bm"/></svg></i><i class="b"><svg><use href="#ref"/></svg></i></div>
 <div class="tb t13"><i class="b"><svg><use href="#ident"/></svg></i><i class="b"><svg><use href="#act"/></svg></i><i class="a a18 dim"></i><i class="b"><svg><use href="#sel"/></svg></i><i class="a"></i><i class="b"><svg><use href="#selv"/></svg></i><i class="a"></i><i class="b"><svg><use href="#desel"/></svg></i><i class="b"><svg><use href="#tab"/></svg></i><i class="b"><svg><use href="#calc"/></svg></i><i class="b"><svg><use href="#gear"/></svg></i><i class="b"><svg><use href="#sig"/></svg></i><i class="b"><svg><use href="#meas"/></svg></i><i class="a"></i><i class="b"><svg><use href="#tip"/></svg></i><i class="b"><svg><use href="#tann"/></svg></i><i class="a"></i></div>
 <div class="tb t14"><i class="b"><svg><use href="#help"/></svg></i></div>
 <div class="tb t15"><i class="b"><svg><use href="#mgn"/></svg></i><i class="b"><svg><use href="#vert"/></svg></i><i class="b n30"><svg><use href="#dots"/></svg></i><span class="spin"><span>0,00</span><span class="sp"><i class="up"></i><i class="dn"></i></span></span><span class="metri"><span>metri</span><i class="dd"></i></span><i class="b n30"><svg><use href="#tr"/></svg></i><i class="b"><svg><use href="#xg"/></svg></i><i class="b"><svg><use href="#xg2"/></svg></i><i class="a dim"></i></div>
 <div class="tb t16"><i class="b"><svg><use href="#hnd"/></svg></i></div>
 <div class="tb t17"><i class="b"><svg><use href="#cube"/></svg></i></div>
 <div class="tb t17"><i class="b"><svg><use href="#ms"/></svg></i></div>
 <div class="tb t19"><i class="b"><svg><use href="#jt"/></svg></i><i class="b"><svg><use href="#jt2"/></svg></i></div>
</div>
<div class="row">
 <div class="tb t21"><i class="b"><svg><use href="#penm"/></svg></i><i class="b"><svg><use href="#pen"/></svg></i><i class="b"><svg><use href="#savg"/></svg></i><i class="b"><svg><use href="#pa"/></svg></i><i class="b"><svg><use href="#pm"/></svg></i><i class="a a17 dim"></i><i class="b"><svg><use href="#vt"/></svg></i><i class="b"><svg><use href="#tr2"/></svg></i><i class="b"><svg><use href="#cut"/></svg></i><i class="b"><svg><use href="#cop"/></svg></i><i class="b"><svg><use href="#pst"/></svg></i><i class="b"><svg><use href="#und"/></svg></i><i class="b"><svg><use href="#red"/></svg></i></div>
 <div class="tb t22"><i class="b"><svg><use href="#db"/></svg></i></div>
 <div class="tb t23"><i class="b"><svg><use href="#abc"/></svg></i><i class="b"><svg><use href="#dia"/></svg></i><i class="b"><svg><use href="#abl"/></svg></i><i class="b"><svg><use href="#abp"/></svg></i><i class="b"><svg><use href="#abe"/></svg></i><i class="b"><svg><use href="#abm"/></svg></i><i class="b"><svg><use href="#abr"/></svg></i><i class="b"><svg><use href="#abd"/></svg></i></div>
 <div class="tb t24"><i class="b"><svg><use href="#rt"/></svg></i><i class="b"><svg><use href="#ro"/></svg></i><i class="b"><svg><use href="#hx"/></svg></i><i class="b"><svg><use href="#rg"/></svg></i><i class="b"><svg><use href="#pa2"/></svg></i><i class="b"><svg><use href="#rg"/></svg></i><i class="b"><svg><use href="#rd"/></svg></i><i class="b"><svg><use href="#pd"/></svg></i><i class="b"><svg><use href="#bg"/></svg></i><i class="b"><svg><use href="#bg2"/></svg></i><i class="b"><svg><use href="#sc"/></svg></i><i class="b"><svg><use href="#sc"/></svg></i><i class="b"><svg><use href="#sc2"/></svg></i><i class="b"><svg><use href="#grd"/></svg></i><i class="b"><svg><use href="#rot"/></svg></i><i class="a dim"></i></div>
 <div class="tb t25"><i class="b"><svg><use href="#n1"/></svg></i><i class="a w14 dim"></i><i class="b"><svg><use href="#n2"/></svg></i><i class="a w14 dim"></i><i class="b"><svg><use href="#n3"/></svg></i><i class="a w14 dim"></i><i class="b"><svg><use href="#n4"/></svg></i><i class="a w14 dim"></i><i class="b"><svg><use href="#n5"/></svg></i><i class="a w14 dim"></i></div>
 <div class="tb t26"><i class="b"><svg viewBox="0 0 26 26"><path d="M13 1L3 22h20zM13 9l-5 10h10z" fill-rule="evenodd" fill="#6ea52e"/><path d="M3 22h20" stroke="#f09a2b" stroke-width="2.500"/></svg></i><i class="b"><svg viewBox="0 0 26 26"><circle cx="12" cy="12" r="11" fill="#5a8abb" stroke="#e6eef6"/><path d="M1 12h22M12 1v22M4 5c4 3 12 3 16 0M4 19c4-3 12-3 16 0M8 2c-3 6-3 14 0 20M16 2c3 6 3 14 0 20" stroke="#d7e1eb" fill="none" stroke-width=".9"/><rect x="15" y="15" width="10" height="10" fill="#2c6b40"/><path d="M17 18h6l-3 4z" fill="#000"/></svg></i><i class="b"><svg viewBox="0 0 26 26"><circle cx="12" cy="12" r="11" fill="#5a8abb" stroke="#e6eef6"/><path d="M1 12h22M12 1v22M4 5c4 3 12 3 16 0M4 19c4-3 12-3 16 0M8 2c-3 6-3 14 0 20M16 2c3 6 3 14 0 20" stroke="#d7e1eb" fill="none" stroke-width=".9"/><rect x="15" y="15" width="10" height="10" fill="#4c9a5e"/><circle cx="20" cy="20" r="2.500" fill="none" stroke="#fff"/></svg></i><i class="b"><svg viewBox="0 0 26 26"><circle cx="13" cy="11" r="11" fill="#3f74a8" stroke="#e6eef6"/><path d="M2 11h22M13 0v22M5 4c4 3 12 3 16 0M5 18c4-3 12-3 16 0" stroke="#d7e1eb" fill="none" stroke-width=".9"/><circle cx="7" cy="21" r="4.500" fill="#111"/><circle cx="19" cy="21" r="4.500" fill="#111"/><circle cx="7" cy="21" r="2" fill="#fff"/><circle cx="19" cy="21" r="2" fill="#fff"/><path d="M11 17h4v4h-4z" fill="#111"/></svg></i></div>
 <div class="tb t27"><i class="b"><svg><use href="#tc"/></svg></i></div>
 <div class="tb t27"><i class="b"><svg><use href="#cam"/></svg></i><i class="b"><svg><use href="#shot"/></svg></i></div>
</div>
</div>

<main class="main">
 <aside class="vbar">
  <div class="vgrip"></div><i class="v"><svg><use href="#addl"/></svg></i><i class="v"><svg><use href="#newgp"/></svg></i><i class="v"><svg><use href="#newsh"/></svg></i><i class="v"><svg><use href="#newsl"/></svg></i><i class="v"><svg><use href="#chip"/></svg></i>
  <div class="vsep"></div><div class="vgrip"></div><i class="v"><svg><use href="#xh"/></svg></i><i class="v"><svg><use href="#digit"/></svg></i>
 </aside>
 <section class="dock">
  <div class="phead"><span>Layer</span><span class="pbtn"><svg viewBox="0 0 10 10"><path d="M.5 3h6.500v6.500H.5zM3 3V.5h6.500V7H7" fill="none" stroke="#111"/></svg><svg viewBox="0 0 10 10"><path d="M1 1l8 8M9 1L1 9" stroke="#111" stroke-width="1.300"/></svg></span></div>
  <div class="ptools"><i class="s"><svg><use href="#erase"/></svg></i><i class="s"><svg><use href="#gcpy"/></svg></i><i class="s"><svg><use href="#eye"/></svg></i><i class="s"><svg><use href="#filt"/></svg></i><i class="s"><svg><use href="#eps"/></svg></i><i class="a a11 dim"></i><i class="s"><svg><use href="#tdown"/></svg></i><i class="s"><svg><use href="#tup"/></svg></i><i class="s"><svg><use href="#rem"/></svg></i></div>
  <div class="ltree">
   <div class="lrow off"><span class="cb"></span><span class="sw sw1"></span><span>regioni_g</span></div>
   <div class="lrow"><span class="cb"><svg viewBox="0 0 16 16"><path d="M3 8l3.500 3.500L13 4.500" fill="none" stroke="#333"/></svg></span><span class="sw sw2"></span><span>province_g</span></div>
   <div class="lrow"><span class="cb"><svg viewBox="0 0 16 16"><path d="M3 8l3.500 3.500L13 4.500" fill="none" stroke="#333"/></svg></span><span class="sw sw3"></span><span>comuni_g</span></div>
  </div>
  <div class="phead ph2"><span>Browser</span><span class="pbtn"><svg viewBox="0 0 10 10"><path d="M.5 3h6.500v6.500H.5zM3 3V.5h6.500V7H7" fill="none" stroke="#111"/></svg><svg viewBox="0 0 10 10"><path d="M1 1l8 8M9 1L1 9" stroke="#111" stroke-width="1.300"/></svg></span></div>
  <div class="ptools"><i class="s"><svg><use href="#addb"/></svg></i><i class="s"><svg><use href="#ref"/></svg></i><i class="s"><svg><use href="#filt"/></svg></i><i class="s"><svg><use href="#tup"/></svg></i><i class="s"><svg><use href="#info"/></svg></i></div>
  <div class="btree">
   <div class="bview">
    <div class="blist">
     <div class="trow"><svg class="ch dk" viewBox="0 0 12 12"><path d="M1 4l5 5 5-5"/></svg><svg class="ti"><use href="#star"/></svg><span>Preferiti</span></div>
     <div class="trow kid"><svg class="ch" viewBox="0 0 12 12"><path d="M4 1l5 5-5 5"/></svg><svg class="ti"><use href="#dir"/></svg><span>C:\EsercitazioniQGIS2009</span></div>
     <div class="trow kid"><svg class="ch" viewBox="0 0 12 12"><path d="M4 1l5 5-5 5"/></svg><svg class="ti"><use href="#dir"/></svg><span>C:\Users\Salvatore\condiv_ro</span></div>
     <div class="trow kid"><svg class="ch" viewBox="0 0 12 12"><path d="M4 1l5 5-5 5"/></svg><svg class="ti"><use href="#dir"/></svg><span>C:\Users\Salvatore\Desktop</span></div>
     <div class="trow kid"><svg class="ch" viewBox="0 0 12 12"><path d="M4 1l5 5-5 5"/></svg><svg class="ti"><use href="#dir"/></svg><span>C:\Users\Salvatore\Desktop\a</span></div>
     <div class="trow kid"><svg class="ch" viewBox="0 0 12 12"><path d="M4 1l5 5-5 5"/></svg><svg class="ti"><use href="#dir"/></svg><span>C:\Users\Salvatore\Document</span></div>
     <div class="trow kid"><svg class="ch" viewBox="0 0 12 12"><path d="M4 1l5 5-5 5"/></svg><svg class="ti"><use href="#dir"/></svg><span>C:\Users\Salvatore\Document</span></div>
     <div class="trow kid"><svg class="ch" viewBox="0 0 12 12"><path d="M4 1l5 5-5 5"/></svg><svg class="ti"><use href="#dir"/></svg><span>C:\Users\Salvatore\Document</span></div>
     <div class="trow kid"><svg class="ch" viewBox="0 0 12 12"><path d="M4 1l5 5-5 5"/></svg><svg class="ti"><use href="#dir"/></svg><span>C:\Users\Salvatore\Download</span></div>
     <div class="trow"><svg class="ch" viewBox="0 0 12 12"><path d="M4 1l5 5-5 5"/></svg><svg class="ti"><use href="#proj"/></svg><span>Home del progetto</span></div>
     <div class="trow"><svg class="ch" viewBox="0 0 12 12"><path d="M4 1l5 5-5 5"/></svg><svg class="ti"><use href="#dir"/></svg><span>Home</span></div>
     <div class="trow"><svg class="ch" viewBox="0 0 12 12"><path d="M4 1l5 5-5 5"/></svg><svg class="ti"><use href="#dir"/></svg><span>C:\</span></div>
     <div class="trow"><svg class="ch" viewBox="0 0 12 12"><path d="M4 1l5 5-5 5"/></svg><svg class="ti"><use href="#dir"/></svg><span>D:\</span></div>
     <div class="trow"><svg class="ch" viewBox="0 0 12 12"><path d="M4 1l5 5-5 5"/></svg><svg class="ti"><use href="#dir"/></svg><span>E:\</span></div>
     <div class="trow"><svg class="ch" viewBox="0 0 12 12"><path d="M4 1l5 5-5 5"/></svg><svg class="ti"><use href="#dir"/></svg><span>F:\</span></div>
     <div class="trow"><svg class="ch" viewBox="0 0 12 12"><path d="M4 1l5 5-5 5"/></svg><svg class="ti"><use href="#gpk"/></svg><span>GeoPackage</span></div>
     <div class="trow"><svg class="ch" viewBox="0 0 12 12"><path d="M4 1l5 5-5 5"/></svg><svg class="ti"><use href="#feath"/></svg><span>SpatiaLite</span></div>
     <div class="trow"><svg class="ch" viewBox="0 0 12 12"><path d="M4 1l5 5-5 5"/></svg><svg class="ti"><use href="#pg"/></svg><span>PostGIS</span></div>
     <div class="trow"><svg class="ch none" viewBox="0 0 12 12"></svg><svg class="ti"><use href="#mss"/></svg><span>MSSQL</span></div>
    </div>
    <div class="vscroll"><div class="sarrow"><svg viewBox="0 0 12 12"><path d="M1 8l5-5 5 5"/></svg></div><div class="strack"><div class="sthumb"></div></div><div class="sarrow"><svg viewBox="0 0 12 12"><path d="M1 4l5 5 5-5"/></svg></div></div>
   </div>
   <div class="hscroll"><div class="harrow"><svg viewBox="0 0 12 12"><path d="M8 1L3 6l5 5"/></svg></div><div class="htrack"><div class="hthumb"></div></div><div class="harrow"><svg viewBox="0 0 12 12"><path d="M4 1l5 5-5 5"/></svg></div></div>
  </div>
 </section>
 <section class="work">
  <div class="canvas"><canvas id="italy" class="italy" width="1592" height="686"></canvas></div>
  <div class="at-head">regioni_g :: Totale degli elementi: 20, Filtrati: 20, Selezionati: 0<span class="pbtn"><svg viewBox="0 0 10 10"><path d="M.5 3h6.500v6.500H.5zM3 3V.5h6.500V7H7" fill="none" stroke="#111"/></svg><svg viewBox="0 0 10 10"><path d="M1 1l8 8M9 1L1 9" stroke="#111" stroke-width="1.300"/></svg></span></div>
  <div class="at-tools"><i class="t"><svg><use href="#pen"/></svg></i><i class="t"><svg><use href="#penm"/></svg></i><i class="t"><svg><use href="#savg"/></svg></i><i class="t"><svg><use href="#ref"/></svg></i><i class="ts"></i><i class="t"><svg><use href="#ew"/></svg></i><i class="t"><svg><use href="#tr2"/></svg></i><i class="t"><svg><use href="#cut"/></svg></i><i class="t"><svg><use href="#cop"/></svg></i><i class="t"><svg><use href="#pst"/></svg></i><i class="ts"></i><i class="t"><svg><use href="#selx"/></svg></i><i class="t"><svg><use href="#rows"/></svg></i><i class="t"><svg><use href="#inv"/></svg></i><i class="t"><svg><use href="#desel"/></svg></i><i class="t"><svg><use href="#flt"/></svg></i><i class="t"><svg><use href="#tot"/></svg></i><i class="t"><svg><use href="#pan"/></svg></i><i class="t"><svg><use href="#zsel"/></svg></i><i class="ts"></i><i class="t"><svg><use href="#ew"/></svg></i><i class="t"><svg><use href="#ew"/></svg></i><i class="t"><svg><use href="#calc"/></svg></i><i class="ts"></i><i class="t"><svg><use href="#evb"/></svg></i><i class="ts"></i><i class="t"><svg><use href="#act"/></svg></i></div>
  <div class="at-body">
   <div class="at-clip">
   <table class="grid">
    <colgroup><col class="c0"><col class="c"><col class="c"><col class="c"><col class="c"><col class="c"><col class="c"></colgroup>
    <thead><tr><th></th><th>pk</th><th>PK_UID</th><th>COD_RIP</th><th>COD_REG</th><th>DEN_REG</th><th>_median</th></tr></thead>
    <tbody>
     <tr><th>1</th><td class="n">1</td><td class="n">1</td><td class="n">1</td><td class="n">1</td><td>Piemonte</td><td class="nul">NULL</td></tr>
     <tr class="alt"><th>2</th><td class="n">2</td><td class="n">2</td><td class="n">1</td><td class="n">2</td><td>Valle d'Aosta</td><td class="nul">NULL</td></tr>
     <tr><th>3</th><td class="n">3</td><td class="n">3</td><td class="n">1</td><td class="n">3</td><td>Lombardia</td><td class="nul">NULL</td></tr>
     <tr class="alt tall"><th></th><td></td><td></td><td></td><td></td><td>Trentino-Alto</td><td></td></tr>
    </tbody>
   </table>
   </div>
   <div class="at-scroll"><div class="sarrow"><svg viewBox="0 0 12 12"><path d="M1 8l5-5 5 5"/></svg></div><div class="attrack"><div class="atthumb"></div></div><div class="sarrow"><svg viewBox="0 0 12 12"><path d="M1 4l5 5 5-5"/></svg></div></div>
  </div>
  <div class="at-foot"><span class="allbtn"><svg><use href="#filt"/></svg><span>Mostra tutti gli elementi</span><i class="corner"></i></span><span class="modes"><i class="md"><svg><use href="#ffo"/></svg></i><i class="md on"><svg><use href="#ffm"/></svg></i></span></div>
 </section>
</main>

<footer class="status">
 <div class="locator"><svg><use href="#srch"/></svg><span>Digita per localizzare (Ctrl+K)</span></div>
 <div class="sright">
  <span class="l">Coordinata</span><span class="f f-c">-346300,4992803</span><svg class="si si-cd"><use href="#cd"/></svg>
  <span class="l l-s">Scala</span><span class="f f-s"><span>1:9.302.599</span><svg class="ca" viewBox="0 0 10 6"><path d="M1 1l4 4 4-4"/></svg></span><svg class="si si-l"><use href="#lock"/></svg>
  <span class="l l-z">Lente d'ingrandimento</span><span class="f f-z"><span>100%</span><span class="sp2"><i class="up2"></i><i class="dn2"></i></span></span>
  <span class="l l-r">Rotazione</span><span class="f f-r"><span>0,0 °</span><span class="sp2"><i class="up2"></i><i class="dn2"></i></span></span>
  <span class="cb cb2"><svg viewBox="0 0 16 16"><path d="M3 8l3.500 3.500L13 4.500" fill="none" stroke="#333"/></svg></span><span class="l l-v">Visualizza</span>
  <svg class="si si-g"><use href="#glob"/></svg><span class="l l-e">EPSG:32632</span><svg class="si si-b"><use href="#bub"/></svg>
 </div>
</footer>
<script src="map.js"></script>
</body>
</html>
```
FILE: styles.css
```css
*{box-sizing:border-box}
html,body{margin:0;padding:0}
body{width:1920px;height:1080px;overflow:hidden;background:#f0f0f0;color:#111;font-family:"Noto Sans","Open Sans",sans-serif;font-size:13px;line-height:1.2}
i{font-style:normal;display:block}
.sprite{position:absolute;width:0;height:0}
.title{height:29px;background:#fff;display:flex;align-items:center;position:relative}
.logo{width:24px;height:24px;margin-left:1px}
.title-t{font-size:14.3px;margin-left:2px;margin-top:-2px}
.win{margin-left:auto;margin-right:4px;display:flex}
.win svg{width:12px;height:12px;margin:0 23px 0 23px;overflow:visible}
.win svg:first-child{margin-right:22px}
.menu{height:24px;background:#fff;display:flex;align-items:center;font-size:13px;color:#111}
.menu span{padding:0 8px;line-height:23px;height:23px}
.menu .on{background:#d8e9f8;border:1px solid #c2dcf3;width:69px;padding:0 7px}
.m2{margin-left:1px}.m3{margin-left:1px}.m4{margin-left:1.500px}.m8{margin-left:3px}
u{text-underline-offset:1px}
.bars{background:#f0f0f0;height:68px;border-bottom:1px solid #8f8f8f}
.row{display:flex;height:33.5px;border-bottom:1px solid #cfcfcf}
.row+.row{border-bottom:0}
.tb{display:flex;align-items:center;height:100%;border-right:1px solid #d0d0d0;position:relative}
.tb::before{content:"";position:absolute;left:3px;top:6px;bottom:6px;width:3px;background:radial-gradient(circle,#a9a9a9 1px,transparent 1.1px) 0 0/3px 4px}
.t11{width:198px;padding-left:11.5px}
.t12{width:450px;padding-left:13.5px}
.t13{width:474px;padding-left:9.5px}
.t14{width:45px;padding-left:11.5px}
.t15{width:374px;padding-left:11.5px}
.t16{width:45px;padding-left:14.5px}
.t17{width:45px;padding-left:12.5px}
.t19{flex:1;padding-left:11.5px;border-right:0}
.t21{width:400px;padding-left:11.5px}
.t22{width:57px;padding-left:12.5px}
.t23{width:272px;padding-left:9.5px}
.t24{width:506px;padding-left:12.5px}
.t25{width:245px;padding-left:15.5px}
.t26{width:137px;padding-left:10.5px}
.t27{width:45px;padding-left:11.5px}
.t27:last-child{flex:1;border-right:0}
.b{flex:0 0 31px;width:31px;height:31px;margin-top:1px;display:flex;align-items:center;justify-content:center}
.b svg{width:26px;height:26px;display:block}
.b.n30{flex-basis:30px;width:30px}
.b.act{background:#cce4f7;border:1px solid #99c9ef}
.a{flex:0 0 15px;width:15px;height:10px;position:relative;margin-top:1px}
.a::after{content:"";position:absolute;left:50%;top:2px;margin-left:-5px;border:5px solid transparent;border-top:6px solid #000;border-bottom:0}
.a.dim::after{border-top-color:#6f6f6f}
.a18{flex-basis:18px;width:18px}.a17{flex-basis:17px;width:17px}.w14{flex-basis:14.5px;width:14.5px}.a11{flex-basis:14px;width:14px}
.spin{width:96px;height:25px;margin-left:1px;margin-top:1px;background:#f1f1f1;border:1px solid #cfcfcf;display:flex;align-items:center;justify-content:space-between;padding-left:3px;font-size:13px;color:#666}
.sp{width:13px;height:21px;border:1px solid #cfcfcf;display:flex;flex-direction:column;justify-content:space-around;align-items:center;margin-right:1px}
.up,.up2{border:4px solid transparent;border-bottom:5px solid #555;border-top:0}
.dn,.dn2{border:4px solid transparent;border-top:5px solid #555;border-bottom:0}
.metri{width:63px;height:28px;margin-left:2px;margin-top:1px;background:#c9c9c9;border:1px solid #bbb;color:#777;display:flex;align-items:center;justify-content:space-between;padding:0 6px 0 4px;font-size:14px}
.dd{width:0;height:0;border:4px solid transparent;border-top:5px solid #fff;border-bottom:0}
.main{display:flex;height:927px;background:#f0f0f0}
.vbar{flex:0 0 35px;display:flex;flex-direction:column;align-items:center;padding-top:2px}
.vgrip{width:26px;height:3px;margin:3px 0 4px;background:radial-gradient(circle,#a9a9a9 1px,transparent 1.1px) 0 0/4px 3px}
.v{flex:0 0 30px;width:30px;height:30px;display:flex;align-items:center;justify-content:center}
.v svg{width:26px;height:26px}
.vsep{width:35px;height:2px;background:#d8d8d8;margin-top:3px}
.vsep+.vgrip{margin-top:2px;margin-bottom:4px}
.dock{flex:0 0 287px;width:287px;display:flex;flex-direction:column;padding-top:2px}
.phead{height:25px;flex:0 0 25px;background:#d9d9d9;border:1px solid #c4c4c4;display:flex;align-items:center;justify-content:space-between;padding:0 4px;font-size:13.5px}
.pbtn{display:flex;gap:7px}
.pbtn svg{width:10px;height:10px;display:block}
.ptools{height:27px;flex:0 0 27px;display:flex;align-items:center;padding-left:2px}
.s{flex:0 0 23.2px;width:23.2px;height:23px;display:flex;align-items:center;justify-content:center}
.s svg{width:18px;height:18px}
.ltree{height:336px;flex:0 0 336px;background:#fff;border:1px solid #9a9a9a;padding-top:2px;font-weight:700;font-size:13.2px}
.lrow{height:20.5px;display:flex;align-items:center;padding-left:28px}
.cb{width:16px;height:16px;border:1px solid #444;background:#fff;flex:none;display:block}
.cb svg{width:14px;height:14px;display:block}
.sw{width:18px;height:17px;margin:0 6px;flex:none;background:#fff}
.sw1{border:1px solid #6aa6e8}.sw2{border:2px solid #333}.sw3{background:#7fcb80;border:1px solid #333}
.off{color:#bfbfbf;text-decoration-color:#bfbfbf}
.off span{text-decoration:underline}
.ph2{margin-top:7px}
.btree{flex:1;background:#fff;border:1px solid #9a9a9a;display:flex;flex-direction:column;min-height:0}
.bview{flex:1;display:flex;min-height:0}
.blist{flex:1;overflow:hidden;min-width:0;padding-top:1px}
.trow{height:24px;display:flex;align-items:center;white-space:nowrap;padding-left:5px;font-size:13px}
.trow.kid{padding-left:30px}
.ch{width:12px;height:12px;flex:none;fill:none;stroke:#a6a6a6;stroke-width:1.800}
.ch.dk{stroke:#444}
.ti{width:20px;height:20px;flex:none;margin:0 7px 0 10px}
.vscroll{flex:0 0 19px;margin-right:1px;display:flex;flex-direction:column;background:#f0f0f0}
.sarrow{height:21px;flex:none;display:flex;align-items:center;justify-content:center;background:#f0f0f0}
.sarrow svg,.harrow svg{width:12px;height:12px;fill:none;stroke:#555;stroke-width:1.800}
.strack{flex:1;background:#f0f0f0}
.sthumb{height:280px;background:#c9c9c9}
.hscroll{flex:0 0 19px;display:flex;background:#f0f0f0;padding-right:21px}
.harrow{flex:0 0 21px;display:flex;align-items:center;justify-content:center}
.htrack{flex:1}
.hthumb{width:116px;height:100%;background:#c9c9c9}
.work{flex:1;display:flex;flex-direction:column;margin-left:5px;min-width:0}
.canvas{height:687px;flex:none;background:#fff;border:1px solid #8d8d8d;border-right:0;overflow:hidden}
.italy{display:block;width:1592px;height:686px}
.at-head{margin-top:7px;height:25px;flex:none;background:#d9d9d9;border:1px solid #c4c4c4;display:flex;align-items:center;justify-content:space-between;padding:0 4px;font-size:13px}
.at-tools{height:28px;flex:none;display:flex;align-items:center}
.t{flex:0 0 23px;width:23px;height:22px;display:flex;align-items:center;justify-content:center}
.t svg{width:17px;height:17px}
.ts{flex:0 0 1px;height:19px;background:#cfcfcf;margin:0 3px}
.at-body{height:151px;flex:none;background:#fff;border:1px solid #8d8d8d;border-right:0;display:flex;min-height:0}
.at-clip{flex:1;overflow:hidden;min-width:0}
.grid{border-collapse:collapse;table-layout:fixed;width:774px;font-size:13px}
.c0{width:24px}.c{width:125px}
.grid th{font-weight:400;padding:0}
.grid thead th{height:27px;padding-top:2px;text-align:center;border-right:1px solid #e6e6e6}
.grid tbody th{text-align:left;padding:3px 0 0 5px;border-right:1px solid #d6d6d6;border-bottom:0}
.grid td{height:37px;border-right:1px solid #d6d6d6;border-bottom:1px solid #d6d6d6;padding:2px 4px 0;white-space:nowrap;vertical-align:middle}
.grid .n{text-align:right}
.grid .nul{text-align:right;color:#9d9d9d;font-style:italic}
.alt td{background:#f5f5f5}
.grid .tall td{vertical-align:top;line-height:18px;padding-top:0}
.at-scroll{flex:0 0 19px;margin-right:3px;display:flex;flex-direction:column;background:#fff}
.at-scroll .sarrow{height:20px;background:#fff}
.attrack{flex:1;background:#f0f0f0}
.atthumb{height:22px;margin-top:2px;background:#c9c9c9}
.at-foot{height:29px;flex:none;display:flex;align-items:center;justify-content:space-between;padding:0 3px 0 5px}
.allbtn{width:182px;height:25px;background:#e1e1e1;border:1px solid #adadad;display:flex;align-items:center;padding-left:4px;position:relative;font-size:13px}
.allbtn svg{width:18px;height:20px;margin-right:5px}
.corner{position:absolute;right:3px;bottom:2px;border:2px solid transparent;border-top:3px solid #000;border-bottom:0}
.modes{display:flex;gap:1px}
.md{width:25px;height:23px;display:flex;align-items:center;justify-content:center;background:#dde3e8;border:1px solid #bfc9d2}
.md svg{width:20px;height:20px}
.md.on{background:#cce4f7;border:1px solid #2c6fb5}
.status{height:26px;margin-top:4px;display:flex;align-items:center;position:relative}
.status::after{content:"";position:absolute;left:0;right:0;top:26px;height:2px;background:#1e1e1e}
.locator{margin-left:4px;width:274px;height:24px;background:#fff;border:1px solid #7c7c7c;display:flex;align-items:center;padding-left:7px;color:#8a8a8a;font-size:13px}
.locator svg{width:14px;height:14px;margin-right:7px}
.sright{margin-left:auto;display:flex;align-items:center;font-size:13px}
.f{height:24px;background:#fff;border:1px solid #7c7c7c;display:flex;align-items:center;justify-content:space-between;padding-left:3px;flex:none}
.l{flex:none}
.f-c{width:112px;margin-left:3px;font-size:12.5px;white-space:nowrap}
.si{flex:none}
.si-cd{width:22px;height:24px;margin:0 3px 0 2px}
.l-s{margin-left:9px}
.f-s{width:97px;margin-left:3px;padding-right:4px}
.ca{width:10px;height:6px;fill:none;stroke:#666}
.si-l{width:15px;height:22px;margin:0 16px 0 6px}
.f-z{width:85px;margin-left:4px}
.sp2{width:15px;height:22px;display:flex;flex-direction:column;align-items:center;justify-content:space-around;border-left:1px solid #b5b5b5}
.up2{border-bottom-color:#000}.dn2{border-top-color:#000}
.l-r{margin-left:10px}
.f-r{width:84px;margin-left:10px}
.cb2{width:15px;height:15px;margin-left:7px}
.l-v{margin-left:7px}
.si-g{width:20px;height:22px;margin:0 2px 0 18px}
.si-b{width:24px;height:24px;margin:0 5px 0 14px}
```
FILE: map.js
```javascript
(function () {
  var canvas = document.getElementById("italy");
  var ctx = canvas.getContext("2d");
  var OX = 328, OY = 122;
  var MAIN = "878,213 885,208 897,207 905,203 917,205 922,197 930,183 942,174 947,180 948,190 958,198 962,202 968,193 976,180 977,173 983,175 985,185 997,182 1007,183 1015,177 1007,172 1010,167 1020,168 1020,155 1030,153 1043,155 1050,147 1063,145 1077,142 1088,138 1090,143 1095,153 1103,161 1117,163 1133,165 1148,167 1147,173 1140,180 1148,188 1143,197 1147,205 1158,217 1155,221 1147,212 1137,212 1127,218 1117,223 1100,233 1095,245 1107,258 1100,267 1095,277 1098,290 1107,307 1127,320 1150,332 1158,343 1165,363 1170,373 1180,390 1203,410 1223,422 1247,421 1263,418 1269,427 1260,438 1267,448 1293,458 1320,468 1333,478 1352,485 1357,493 1375,507 1377,517 1373,532 1363,528 1352,518 1340,505 1323,502 1312,497 1303,507 1293,537 1300,547 1318,557 1325,582 1317,587 1300,590 1302,613 1288,627 1282,645 1267,648 1260,640 1267,623 1273,610 1267,605 1282,598 1277,583 1262,547 1257,535 1247,528 1237,532 1220,518 1220,508 1212,498 1195,502 1190,500 1200,490 1183,487 1173,470 1155,465 1138,467 1120,455 1105,442 1095,430 1080,423 1070,415 1055,403 1040,387 1027,373 1027,360 1017,337 1010,315 993,310 977,298 960,293 940,307 930,317 905,328 903,322 912,310 900,308 883,300 877,285 885,270 875,263 868,252 880,243 887,232";
  var SARD = "937,478 933,488 940,493 957,488 968,473 980,467 990,478 995,490 1002,512 995,530 995,547 990,592 972,590 957,605 940,598 930,590 937,583 940,560 938,545 942,528 937,513 928,507 930,492 935,478";
  var SICI = "1118,650 1130,640 1145,640 1157,637 1167,643 1183,647 1210,642 1228,635 1242,632 1258,627 1253,640 1240,670 1247,685 1250,700 1243,720 1230,718 1212,713 1200,700 1183,698 1153,683 1140,675 1130,675 1118,663";
  var PIEM = "942,176 947,188 955,198 948,210 952,222 958,235 947,240 948,252 960,257 967,270 973,278 965,277 953,285 942,284 932,288 928,303 915,310 908,305 897,308 883,300 878,287 885,272 875,262 870,252 882,247 887,242 889,230 905,226 922,225 920,210 928,197 930,185 937,180";
  var ISLES = [[1101,653,3],[1113,651,2.5],[1113,654,3],[1149,609,2.5],[1202,616,2.5],[1211,614,2.5],[1223,613,3.5],[1228,618,3],[1230,623,3],[1233,608,2.5],[1239,599,3],[1100,719,4.5],[1142,770,2],[1127,790,2.2],[1129,790,2.2],[1131,790,2.2],[1129,484,2],[1134,485,2],[1155,491,1.6],[1175,493,4],[1189,503,3],[1002,347,2],[998,369,2.5],[1017,384,4],[1022,383,3.5],[1010,395,2.2],[1019,408,2.2],[1044,407,2.8],[1053,413,1.8],[1237,411,2.3],[933,588,3.5]];

  function fr(v) { return v - Math.floor(v); }
  function hash(x, y, z) {
    var a = fr(x * 0.1031), b = fr(y * 0.103), c = fr(z * 0.0973);
    var d = a * (b + 33.33) + b * (c + 33.33) + c * (a + 33.33);
    a += d; b += d; c += d;
    return fr((a + b) * c);
  }
  function parse(s) {
    return s.split(" ").map(function (p) { var q = p.split(","); return [+q[0] - OX, +q[1] - OY]; });
  }
  // Midpoint displacement gives the coast its small irregularities.
  function rough(pts, amp, passes) {
    for (var k = 0; k < passes; k++) {
      var out = [];
      for (var i = 0; i < pts.length; i++) {
        var a = pts[i], b = pts[(i + 1) % pts.length];
        var dx = b[0] - a[0], dy = b[1] - a[1], r = (hash(a[0] * 7, a[1] * 7, k + 5) - 0.5) * amp;
        out.push(a, [(a[0] + b[0]) / 2 - dy * r, (a[1] + b[1]) / 2 + dx * r]);
      }
      pts = out;
    }
    return pts;
  }
  function trace(c, pts) {
    c.moveTo(pts[0][0], pts[0][1]);
    for (var i = 1; i < pts.length; i++) c.lineTo(pts[i][0], pts[i][1]);
    c.closePath();
  }
  var shapes = [rough(parse(MAIN), 0.34, 3), rough(parse(SARD), 0.34, 3), rough(parse(SICI), 0.34, 3)];
  function land(c) { c.beginPath(); shapes.forEach(function (s) { trace(c, s); }); }

  // Mean distance between municipal seats, by area of the country.
  function spacing(x, y) {
    if (x < 1010 && y > 460) return 7.5;                         // Sardinia
    if (y > 622 && x < 1262) return 7.5;                         // Sicily
    if (y > 535) return 5.2;                                     // Calabria
    if (x > 1190 && x < 1226 && y > 468 && y < 505) return 3;    // Naples
    if (x > 1340) return 6;                                      // Salento
    if (x > 1225 && y < 470) return 11;                          // Gargano
    if (x > 1265) return 10;                                     // Puglia
    if (x > 1225) return 7;                                      // Basilicata
    if (x > 1150 && y > 390) return 5.4;                         // Molise, Campania
    if (y < 225 && x > 1090) return 5.2;                         // Friuli
    if (x < 905 && y < 226) return 6.5;                          // Aosta
    if (x < 960 && y < 320) return 4.4;                          // Piedmont
    if (y < 262) return 4;                                       // Lombardy, Veneto
    if (y < 300) return 5.5;                                     // Emilia
    if (y < 340) return 8;                                       // Tuscany north
    return 8.4;                                                  // Central Italy
  }
  var B = 20, CB = 60, TILE = 3;
  var buckets = {}, coarse = {};
  function put(store, size, x, y) {
    var k = Math.floor(x / size) + ":" + Math.floor(y / size);
    (store[k] = store[k] || []).push([x, y]);
  }
  var x, y;
  for (x = 850; x < 1400; x += TILE) {
    for (y = 125; y < 740; y += TILE) {
      var block = 0.78 + 0.5 * hash(Math.floor(x / 48) * 3, Math.floor(y / 48) * 3, 11);
      var s = spacing(x, y) * block;
      if (hash(x, y, 1) < (TILE * TILE) / (s * s)) {
        put(buckets, B, x + hash(x, y, 2) * TILE, y + hash(x, y, 3) * TILE);
      }
    }
  }
  for (x = 850; x < 1400; x += 38) {
    for (y = 125; y < 740; y += 38) {
      put(coarse, CB, x + hash(x, y, 4) * 38, y + hash(x, y, 6) * 38);
    }
  }
  function gap(store, size, px, py) {
    var cx = Math.floor(px / size), cy = Math.floor(py / size), d1 = 1e9, d2 = 1e9;
    for (var i = cx - 1; i <= cx + 1; i++) {
      for (var j = cy - 1; j <= cy + 1; j++) {
        var list = store[i + ":" + j];
        if (!list) continue;
        for (var n = 0; n < list.length; n++) {
          var dx = list[n][0] - px, dy = list[n][1] - py, d = dx * dx + dy * dy;
          if (d < d1) { d2 = d1; d1 = d; } else if (d < d2) { d2 = d; }
        }
      }
    }
    return Math.sqrt(d2) - Math.sqrt(d1);
  }

  // Boundaries of the municipalities and provinces, painted pixel by pixel.
  var left = 860 - OX, top = 130 - OY, w = 530, h = 605;
  var mask = document.createElement("canvas");
  mask.width = canvas.width; mask.height = canvas.height;
  var mc = mask.getContext("2d");
  mc.fillStyle = "#000"; land(mc); mc.fill();
  var cover = mc.getImageData(left, top, w, h).data;
  var field = document.createElement("canvas");
  field.width = w; field.height = h;
  var fc = field.getContext("2d");
  var img = fc.createImageData(w, h), data = img.data;
  for (var j = 0; j < h; j++) {
    for (var i = 0; i < w; i++) {
      var p = (j * w + i) * 4;
      if (!cover[p + 3]) continue;
      var gx = i + left + OX, gy = j + top + OY;
      var line = spacing(gx, gy) < 5 ? 2.2 : 1.6;
      var a = Math.max(line + 0.5 - gap(buckets, B, gx, gy), 3 - gap(coarse, CB, gx, gy));
      a = Math.min(1, Math.max(0, a));
      data[p] = 35; data[p + 1] = 35; data[p + 2] = 35; data[p + 3] = a * 255;
    }
  }
  fc.putImageData(img, 0, 0);

  land(ctx);
  ctx.fillStyle = "#7bc87d";
  ctx.fill();
  ctx.save();
  land(ctx);
  ctx.clip();
  ctx.drawImage(field, left, top);
  ctx.restore();
  ctx.lineJoin = "round";
  ctx.lineWidth = 4.4;
  ctx.strokeStyle = "#232323";
  land(ctx);
  ctx.stroke();
  ctx.fillStyle = "#232323";
  ISLES.forEach(function (d) {
    ctx.beginPath();
    ctx.arc(d[0] - OX, d[1] - OY, d[2], 0, Math.PI * 2);
    ctx.fill();
  });
  ctx.beginPath();
  trace(ctx, rough(parse(PIEM), 0.22, 2));
  ctx.strokeStyle = "#fe0000";
  ctx.lineWidth = 6.4;
  ctx.stroke();
})();
```
